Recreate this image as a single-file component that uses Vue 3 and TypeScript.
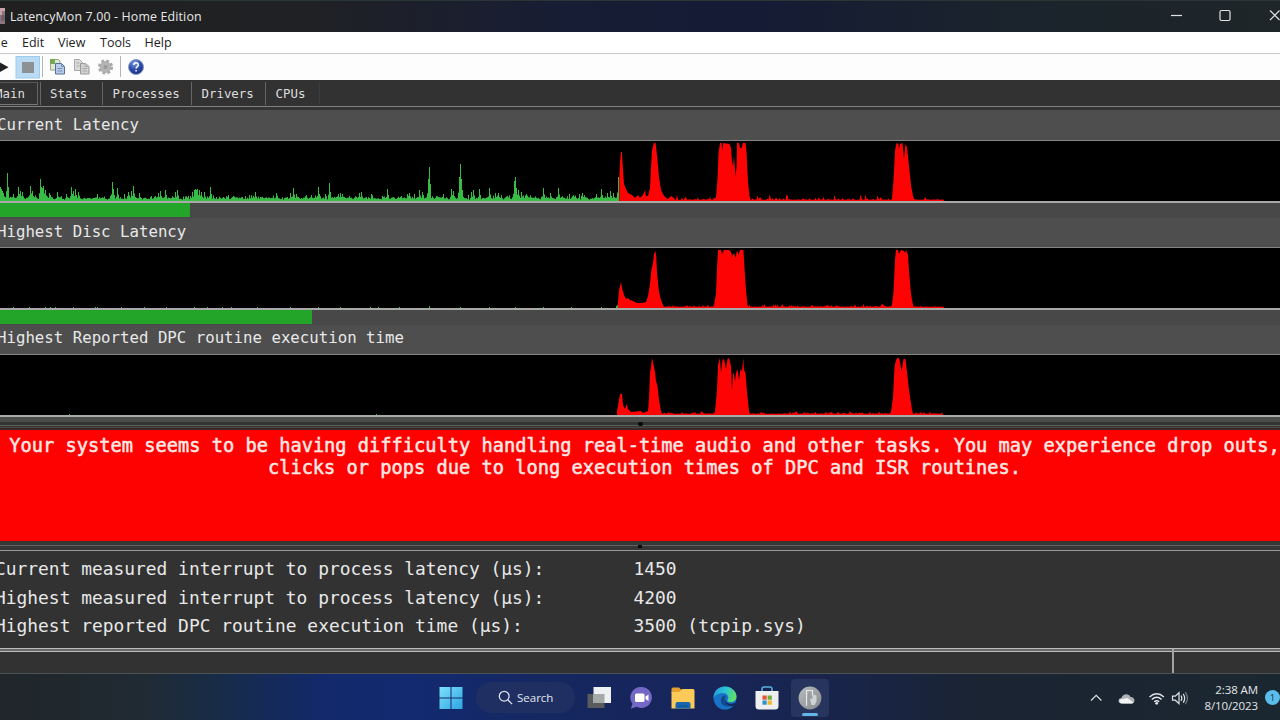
<script setup lang="ts">
type Point = [number, number]

interface Trace {
  id: string
  title: string
  green: string
  red: string
  bar: number | null
}

const BASE = 60

function makeRandom(seed: number): () => number {
  let s = seed
  return () => {
    s = (s * 1664525 + 1013904223) % 4294967296
    return s / 4294967296
  }
}

function greenPath(seed: number, end: number, spikes: Point[], floor: number, range: number): string {
  const rnd = makeRandom(seed)
  const heights: number[] = []
  let drift = 0.5
  for (let x = 0; x < end; x++) {
    drift = drift * 0.55 + rnd() * 0.45
    const r = rnd()
    heights.push(Math.max(0, floor + drift * range * 0.6 + r * r * r * range * 0.5))
  }
  for (const [x, h] of spikes) {
    heights[x] = Math.max(heights[x] ?? 0, h)
    if (h > 7 && x + 1 < end) heights[x + 1] = Math.max(heights[x + 1] ?? 0, h * 0.5)
    if (h > 7 && x > 0) heights[x - 1] = Math.max(heights[x - 1], h * 0.35)
  }
  return heights
    .map((h, x) => (h < 0.4 ? '' : `M${x + 0.5} ${BASE}V${(BASE - h).toFixed(1)}`))
    .join('')
}

function redPath(seed: number, groups: Point[][], end: number, range: number): string {
  const rnd = makeRandom(seed)
  let d = `M${groups[0][0][0]} ${BASE}`
  groups.forEach((group, i) => {
    for (const [x, h] of group) d += `L${x} ${BASE - h}`
    const from = group[group.length - 1][0] + 1
    const to = i + 1 < groups.length ? groups[i + 1][0][0] : end
    for (let x = from; x < to; x++) {
      const r = rnd()
      d += `L${x} ${(BASE - 1.2 - r * r * 0.9 - Math.pow(r, 9) * range).toFixed(1)}`
    }
  })
  return `${d}L${end} ${BASE}Z`
}

const currentSpikes: Point[] = [
  [0, 14], [1, 12], [2, 10], [3, 8], [7, 28], [13, 7], [18, 14], [20, 10], [22, 9], [30, 15], [32, 10],
  [40, 22], [41, 14], [42, 13], [43, 15], [45, 11], [49, 8], [57, 9], [66, 7], [71, 14], [73, 10], [75, 12],
  [78, 9], [97, 7], [112, 19], [113, 12], [117, 13], [124, 7], [128, 9], [131, 10], [133, 15], [139, 8],
  [158, 8], [160, 10], [165, 11], [175, 9], [177, 11], [192, 9], [194, 11], [195, 12], [196, 11], [197, 12],
  [199, 11], [201, 9], [204, 9], [210, 14], [228, 6], [255, 9], [276, 8], [290, 8], [293, 13], [296, 7],
  [318, 14], [329, 18], [325, 7], [338, 7], [340, 8], [342, 7], [359, 8], [361, 9], [371, 7], [387, 12],
  [407, 7], [409, 8], [414, 7], [419, 11], [422, 9], [428, 22], [429, 34], [443, 7], [451, 12], [453, 10],
  [459, 24], [460, 37], [461, 22], [468, 6], [473, 11], [471, 9], [479, 12], [489, 13], [495, 8], [498, 8],
  [514, 20], [515, 24], [516, 13], [518, 11], [521, 9], [526, 7], [543, 13], [550, 8], [558, 13],
  [569, 7], [579, 7], [582, 8], [596, 7], [601, 12], [607, 8], [610, 10], [613, 8], [618, 24]
]

const discSpikes: Point[] = [
  [13, 1], [29, 1], [45, 1], [50, 1], [55, 1], [73, 1], [95, 1], [97, 1], [121, 1], [144, 1], [166, 1],
  [194, 1], [207, 1], [222, 1], [231, 1], [257, 1], [290, 1], [318, 1], [340, 1], [370, 1], [378, 1],
  [399, 1], [429, 2], [460, 1], [489, 1], [515, 1], [543, 1], [571, 1], [601, 1], [616, 2], [617, 3]
]

const traces: Trace[] = [
  {
    id: 'current',
    title: 'Current Latency',
    green: greenPath(41, 619, currentSpikes, 0.8, 6),
    red: redPath(9, [
      [[619.3, 24], [620, 38], [621, 49], [622, 49], [622.7, 36], [624, 17], [626, 12], [628, 8], [632, 6], [635, 3],
        [638, 6], [640, 3], [643, 6], [645, 11], [646, 5], [648, 5], [650, 13], [651, 34], [652, 50], [653, 55], [654, 58], [655.6, 58],
        [657, 46], [659, 24], [661, 11], [663, 7], [665, 4], [668, 2], [671, 5], [674, 3]],
      [[716, 4], [717.5, 22], [718.5, 48], [720, 58], [721.5, 58], [722.3, 51], [723.2, 58], [729.5, 57], [731, 53], [732, 39], [733, 35],
        [734, 45], [735.5, 25], [736.5, 34], [737, 58], [739, 58], [740, 53], [741.5, 53], [743, 58], [745.6, 58], [746.6, 48], [748, 19], [749.5, 5]],
      [[892, 3], [893.5, 20], [895, 50], [896.5, 58], [898.5, 57], [899, 52], [900, 57], [902.5, 58], [904, 42], [905.5, 57], [907, 54], [909, 35], [911, 16], [913, 5]]
    ], 944, 5),
    bar: 189.5
  },
  {
    id: 'disc',
    title: 'Highest Disc Latency',
    green: greenPath(7, 618, discSpikes, 0, 0.3),
    red: redPath(23, [
      [[617.8, 4], [619, 18], [621, 26], [622, 20], [624, 13], [626, 9], [628, 10], [630, 8], [633, 7], [637, 5], [642, 5], [646, 6], [648, 12], [650, 24],
        [651.5, 39], [653, 45], [654, 54], [655.5, 57], [656.3, 51], [657, 35], [659, 16], [661, 8], [663, 3]],
      [[714, 3], [716, 14], [717, 40], [718, 58], [721, 58], [722, 54], [724, 58], [729, 58], [731, 56], [732, 52], [734, 55], [735.5, 50],
        [737, 58], [738.5, 53], [740, 58], [743.5, 58], [744.5, 40], [746, 18], [747.5, 3]],
      [[892, 3], [893.5, 16], [895, 48], [896, 58], [898, 58], [899, 54], [901, 58], [904, 57], [905, 55], [906, 58], [908, 53], [909, 37], [911, 14], [913, 3]]
    ], 944, 2),
    bar: 311.5
  },
  {
    id: 'dpc',
    title: 'Highest Reported DPC routine execution time',
    green: greenPath(3, 617, [[69, 1], [376, 1]], 0, 0),
    red: redPath(57, [
      [[617, 4], [618.5, 12], [620, 21], [622, 21], [623, 10], [625, 6], [626.5, 11], [628, 6], [631, 3], [641, 4], [643, 2], [648, 4], [649, 16], [650, 42],
        [651, 48], [652, 57], [653, 53], [655, 43], [656, 34], [657.5, 29], [659, 15], [661, 4]],
      [[715, 3], [717, 25], [718, 50], [720, 57], [721, 42], [722.5, 55], [724, 56], [726, 46], [727.5, 56], [729, 57], [731, 49], [732, 24], [733, 43],
        [734, 40], [735, 34], [736, 42], [737.5, 46], [739, 35], [740.5, 46], [742, 44], [743.3, 57], [744, 45], [745.5, 42], [747, 23], [749, 4]],
      [[891, 3], [893, 18], [894.5, 48], [896, 55], [897.5, 57], [899, 57], [900, 53], [901.5, 44], [903.5, 56], [905.5, 56], [907, 43], [909, 25], [912, 5]]
    ], 943, 2),
    bar: null
  }
]

const tabs = ['Main', 'Stats', 'Processes', 'Drivers', 'CPUs']
const menus = ['File', 'Edit', 'View', 'Tools', 'Help']

const readings = [
  { label: 'Current measured interrupt to process latency (µs):', value: '1450' },
  { label: 'Highest measured interrupt to process latency (µs):', value: '4200' },
  { label: 'Highest reported DPC routine execution time (µs):', value: '3500 (tcpip.sys)' }
]
</script>

<template>
  <div class="screen">
    <header class="titlebar">
      <svg class="app-icon" width="14" height="16" viewBox="0 0 14 16">
        <rect width="14" height="16" fill="#8d7580" />
        <path d="M9 0h5v3h-3v4H9z" fill="#c9a3a9" />
        <path d="M10 7h4v6h-4z" fill="#6d626c" />
      </svg>
      <span class="title">LatencyMon 7.00 - Home Edition</span>
      <svg class="controls" width="120" height="31" viewBox="0 0 120 31" fill="none" stroke="#dfe3e4" stroke-width="1.2">
        <path d="M11 14.5h11" />
        <rect x="60" y="9.500" width="10" height="10" rx="1.500" />
        <path d="M110 9.500l9.500 9.500M119.500 9.500l-9.500 9.500" />
      </svg>
    </header>

    <nav class="menubar">
      <span v-for="m in menus" :key="m" :class="['menu', m.toLowerCase()]">{{ m }}</span>
    </nav>

    <div class="toolbar">
      <svg width="160" height="26" viewBox="0 0 160 26">
        <defs>
          <radialGradient id="help" cx=".4" cy=".25" r=".8">
            <stop offset="0" stop-color="#7d9fe0" />
            <stop offset=".5" stop-color="#2e4fae" />
            <stop offset="1" stop-color="#182b78" />
          </radialGradient>
        </defs>
        <path d="M0 8.500l8.500 4.700L0 18z" fill="#222" />
        <rect x="16" y="2.500" width="23.500" height="21.500" fill="#b9dcf4" stroke="#9ccbec" />
        <rect x="22" y="8" width="12" height="11" fill="#8d9194" />
        <path d="M42.500 2v21M120.500 2v21" stroke="#b4b4b4" />
        <g stroke-width="1">
          <path d="M50.500 5.500h8l1.500 1.500v9h-9.500z" fill="#dfead0" stroke="#94a78a" />
          <path d="M50 5h5v5h-5z" fill="#78a854" />
          <path d="M55.500 9.500h6l3 3v7.500h-9z" fill="#b9cdea" stroke="#54719d" />
          <path d="M61.500 9.500v3h3M57.500 14.500h5M57.500 17h5" fill="none" stroke="#7890b6" />
          <path d="M74.500 5.500h5l3 3v8h-8z" fill="#dadada" stroke="#a8a8a8" />
          <path d="M80.500 9.500h5l3.500 3v7.500h-8.500z" fill="#d0d0d0" stroke="#9a9a9a" />
          <path d="M85 9.500v3h4M82.500 14.500h4.500M82.500 17h4.500M76.500 9h3M76.500 12h3" fill="none" stroke="#aaa" />
        </g>
        <circle cx="105.500" cy="13" r="5.900" fill="#b4b4b4" />
        <circle cx="105.500" cy="13" r="6.300" fill="none" stroke="#aaa" stroke-width="2.600" stroke-dasharray="2.800 2.150" />
        <circle cx="105.500" cy="13" r="2" fill="#999" />
        <circle cx="136" cy="13" r="7.500" fill="url(#help)" stroke="#8b9cc5" stroke-width="1" />
        <path d="M133.800 11c.1-3 4.500-3 4.500-.1 0 1.700-2.200 1.700-2.200 3.600M136.100 16v1.400" fill="none" stroke="#fff" stroke-width="1.500" />
      </svg>
    </div>

    <div class="tabs">
      <div v-for="t in tabs" :key="t" :class="['tab', t.toLowerCase()]"><span>{{ t }}</span></div>
    </div>

    <section class="traces">
      <div v-for="t in traces" :key="t.id" :class="['trace', t.id]">
        <h2>{{ t.title }}</h2>
        <svg class="plot" width="1280" height="60" viewBox="0 0 1280 60">
          <path :d="t.green" stroke="#37bd45" stroke-width="1" fill="none" />
          <path :d="t.red" fill="#fe0303" />
        </svg>
        <div v-if="t.bar !== null" class="track">
          <div class="fill" :style="{ width: t.bar + 'px' }"></div>
        </div>
      </div>
    </section>

    <div class="splitter upper"><i></i></div>
    <div class="alert">
      Your system seems to be having difficulty handling real-time audio and other tasks. You may experience drop outs,<br />clicks or pops due to long execution times of DPC and ISR routines.
    </div>
    <div class="splitter lower"><i></i></div>

    <section class="readings">
      <div v-for="r in readings" :key="r.label" class="reading">
        <span class="label">{{ r.label }}</span>
        <span>{{ r.value }}</span>
      </div>
    </section>

    <div class="statusbar"><div class="cell"></div></div>

    <footer class="taskbar">
      <div class="apps">
        <svg class="start" width="24" height="24" viewBox="0 0 24 24">
          <defs>
            <linearGradient id="win" x1="0" y1="0" x2="1" y2="1">
              <stop offset="0" stop-color="#7fe0fb" />
              <stop offset="1" stop-color="#2ba5e2" />
            </linearGradient>
          </defs>
          <path d="M.5 1h11v10.500H.5zM12.500 1h11v10.500h-11zM.5 12.500h11V23H.5zM12.500 12.500h11V23h-11z" fill="url(#win)" />
        </svg>
        <div class="search">
          <svg width="15" height="15" viewBox="0 0 15 15" fill="none" stroke="#dbe2ee" stroke-width="1.300">
            <circle cx="6.200" cy="6.200" r="4.900" />
            <path d="M9.800 9.800l4.300 4.300" />
          </svg>
          <span>Search</span>
        </div>
        <svg class="views" width="24" height="22" viewBox="0 0 24 22">
          <path d="M.5 7h17v14H.5z" fill="#595b5d" />
          <path d="M6.500 0H24v16H6.500z" fill="#edf1f2" />
          <path d="M6.500 7h11v9h-11z" fill="#a5a9aa" />
        </svg>
        <svg class="chat" width="24" height="24" viewBox="0 0 24 24">
          <path d="M12.500 1a10.500 10.500 0 1 1-5 19.800L1.800 22.800l1.700-5A10.500 10.500 0 0 1 12.500 1z" fill="#7468c6" />
          <rect x="6" y="7.500" width="9.500" height="8.500" rx="1.500" fill="#fff" />
          <path d="M16.500 10.500l3-2v6.500l-3-2z" fill="#fff" />
        </svg>
        <svg class="folder" width="24" height="22" viewBox="0 0 24 22">
          <path d="M.5 2Q.5.500 2 .5h6L10.500 3v3H.5z" fill="#e3a12f" />
          <path d="M.5 5h8l2.500-3H22Q23.500 2 23.500 3.500v18H.5z" fill="#fcca58" />
          <path d="M4.500 21.500V17q0-2 2-2h11q2 0 2 2v4.500z" fill="#1767ae" />
          <path d="M7 19.500q0-1 1-1h8q1 0 1 1z" fill="#0f4f8d" />
        </svg>
        <svg class="edge" width="24" height="24" viewBox="0 0 24 24">
          <defs>
            <linearGradient id="swirl" x1="0" y1=".2" x2="1" y2=".5">
              <stop offset="0" stop-color="#2199df" />
              <stop offset=".5" stop-color="#2dc4d2" />
              <stop offset="1" stop-color="#62df64" />
            </linearGradient>
          </defs>
          <circle cx="12" cy="12" r="11.500" fill="#1673c5" />
          <path d="M.5 12C1 4 6 .5 12 .5S23.500 5 23.500 10.500c0 4-3 5.500-6 5.500-3.500 0-3.500-1.500-2.500-2.500C16.500 10.500 14 7 10 7 5 7 1.500 10 .5 12z" fill="url(#swirl)" />
          <path d="M9 11c-3 5 0 9.500 6 9.500 3 0 5-1 6.500-3-2 1-8 1.500-9.500-2.500-.8-2 .5-3.500 1-4.500-1-1.500-3-1-4 .5z" fill="#15488e" />
          <path d="M13.500 11c-2 2.500-.5 6.500 4 6.800 3 .2 5.500-1.300 6.500-2.300v3l-2.500 1.500c-3 1-8-1-9-4-.5-2 0-3.500 1-5z" fill="#14285d" />
        </svg>
        <svg class="store" width="24" height="24" viewBox="0 0 24 24">
          <path d="M7 5V3q0-2 2-2h6q2 0 2 2v2" fill="none" stroke="#59b2df" stroke-width="1.500" />
          <path d="M.5 5h23v15q0 3.500-3.500 3.500H4Q.5 23.500.5 20z" fill="#edf0ef" />
          <path d="M7.500 9.500h4.200v4.200H7.500z" fill="#e85238" />
          <path d="M12.600 9.500h4.200v4.200h-4.200z" fill="#6eae3b" />
          <path d="M7.500 14.500h4.200v4.200H7.500z" fill="#2e91d1" />
          <path d="M12.600 14.500h4.200v4.200h-4.200z" fill="#f3b72c" />
        </svg>
        <div class="active">
          <svg width="24" height="24" viewBox="0 0 24 24">
            <defs>
              <linearGradient id="disc" x1="0" y1="0" x2="1" y2="1">
                <stop offset="0" stop-color="#b8bcbe" />
                <stop offset="1" stop-color="#85898c" />
              </linearGradient>
            </defs>
            <circle cx="12" cy="12" r="11.400" fill="url(#disc)" />
            <path d="M8.500 20V4.500h6v5" fill="none" stroke="#e4e6e6" stroke-width="1.200" />
            <path d="M10 6.500h2.500v10.500H10z" fill="#999da0" />
            <path d="M12 13q1.500-1 2.500 0V9.500q2.500-1.500 4 .5v5.500l-2 3.500h-3z" fill="#d0d3d4" />
          </svg>
          <i></i>
        </div>
      </div>
      <div class="tray">
        <svg width="105" height="24" viewBox="0 0 105 24" fill="none">
          <path d="M6 14.500l5.200-5.200 5.200 5.200" stroke="#dce0e2" stroke-width="1.200" />
          <path d="M37 17.500c-4.500 0-4.500-5.500-.5-5.500 1-4.500 7.500-5 9-1 4-.5 6 5.500 1.500 6.500z" fill="#aeb2b5" />
          <path d="M37 17.500c-4-.5-3-5 .5-4.500l5-1 6 4.800q-.8.700-1.500.7z" fill="#f2f3f3" />
          <path d="M64.500 11q7.200-6.500 14.400 0M66.800 13.500q4.900-4.500 9.800 0M69.200 15.800q2.500-2.300 5 0" stroke="#e2e5e7" stroke-width="1.400" />
          <circle cx="71.700" cy="17.300" r="1.400" fill="#e2e5e7" />
          <path d="M87.500 10.200h2.800l3.700-3.500v11l-3.700-3.500h-2.800z" stroke="#dee2e4" stroke-width="1.200" />
          <path d="M96 9.500q1.700 2.700 0 5.400M98.200 7.800q3 4.400 0 8.800" stroke="#dee2e4" stroke-width="1.200" />
          <path d="M100.300 6.200q4.300 6 0 12" stroke="#717b82" stroke-width="1.200" />
        </svg>
        <div class="clock"><span>2:38 AM</span><span>8/10/2023</span></div>
        <div class="badge">1</div>
      </div>
    </footer>
  </div>
</template>

<style>
html,
body {
  margin: 0;
  overflow: hidden;
  background: #323232;
}
</style>

<style scoped>
.screen {
  width: 1280px;
  height: 720px;
  overflow: hidden;
  display: flex;
  flex-direction: column;
  background: #323232;
  color: #e8e8e8;
  font-family: "DejaVu Sans Mono", monospace;
}
.screen * {
  box-sizing: border-box;
}
.screen > * {
  flex: none;
}
svg {
  display: block;
  flex: none;
}
.titlebar {
  height: 32px;
  display: flex;
  align-items: center;
  padding-bottom: 1px;
  border-top: 1px solid #2a3535;
  background: linear-gradient(90deg, #202020 0, #202124 300px, #171d34 560px, #151b35 750px, #1a232c 1000px, #1f2629 1280px);
  font-family: "Open Sans", "Noto Sans", sans-serif;
}
.app-icon {
  margin-left: -9px;
}
.title {
  margin-left: 5px;
  font-size: 12.400px;
  letter-spacing: 0.150px;
  white-space: nowrap;
  color: #e8e8e8;
}
.controls {
  margin-left: auto;
}
.menubar {
  height: 22px;
  display: flex;
  align-items: center;
  background: #fff;
  border-bottom: 1px solid #c8c8c8;
  color: #222;
  font: 12.500px/20px "Open Sans", "Noto Sans", sans-serif;
}
.menu {
  white-space: nowrap;
  flex: none;
  padding-top: 1px;
}
.menu.file { margin-left: -12px; width: 34px; }
.menu.edit { width: 36px; }
.menu.view { width: 42px; }
.menu.tools { width: 44.500px; }
.toolbar {
  height: 26px;
  background: #fdfdfd;
}
.tabs {
  height: 30px;
  display: flex;
  padding-bottom: 4px;
  background: linear-gradient(#323232 25px, #323232 26px, #808080 26px, #808080 27px, #343434 27px);
  font-size: 12.400px;
  color: #dedede;
}
.tab {
  display: flex;
  align-items: center;
  height: 23px;
  margin-top: 2px;
  padding-left: 9.500px;
  border-right: 1px solid #666;
}
.tab.main { width: 38px; padding-left: 0; border-top: 1px solid #555; border-bottom: 1px solid #777; box-shadow: 2px 0 0 #323232, 3px 0 0 #666; }
.tab.main span { margin-left: -5px; }
.tab.stats { width: 65px; padding-left: 12px; }
.tab.processes { width: 89px; }
.tab.drivers { width: 74px; }
.tab.cpus { width: 54px; border-right-color: #3c3c3c; }
.trace h2 {
  margin: 0;
  height: 30px;
  text-indent: -3px;
  border-bottom: 1px solid #858585;
  background: #4e4e4e;
  font-size: 15.720px;
  line-height: 28px;
  font-weight: 400;
  white-space: pre;
}
.trace.current h2 {
  height: 31px;
  line-height: 29px;
}
.trace.dpc h2 {
  line-height: 26px;
}
.plot {
  background: #000;
  border-bottom: 2px solid #a9a9a7;
  box-sizing: content-box !important;
}
.track {
  height: 15px;
  background: #484848;
}
.fill {
  height: 14px;
  background: #23a52a;
}
.splitter {
  display: flex;
  justify-content: center;
}
.upper {
  height: 13px;
  background: linear-gradient(#4b4d4b 0 5px, #323433 5px 8px, #5c5e5c 8px 9px, #343434 9px 10px, #484848 10px 11px, #3b2928 11px);
}
.upper i {
  width: 5px;
  height: 4px;
  margin-top: 5px;
  border-radius: 2px;
  background: #080808;
}
.alert {
  height: 111px;
  padding: 5px 0 0 9px;
  background: #fe0202;
  color: #ffe9e4;
  font-size: 18.680px;
  line-height: 22px;
  text-align: center;
  white-space: nowrap;
  -webkit-text-stroke: 0.500px #ffe9e4;
}
.lower {
  height: 10px;
  background: linear-gradient(#3a3030 0 1px, #363836 1px 4px, #626462 4px 5px, #363636 5px 9px, #999 9px);
}
.lower i {
  width: 4px;
  height: 3px;
  margin-top: 4px;
  background: #0c0c0c;
}
.readings {
  height: 97px;
  padding-top: 4px;
  font-size: 17.900px;
}
.reading {
  display: flex;
  height: 28.500px;
  line-height: 28.500px;
  white-space: nowrap;
}
.label {
  width: 633.500px;
  text-indent: -5px;
}
.statusbar {
  height: 26px;
  border-top: 1px solid #bcbcbc;
  border-bottom: 1px solid #4b5357;
  background: linear-gradient(#686868 0 2px, #bcbcbc 2px 3px, #323232 3px);
}
.cell {
  width: 1174px;
  height: 24px;
  border-right: 2px solid #a3a3a3;
}
.taskbar {
  height: 46px;
  display: flex;
  align-items: center;
  justify-content: space-between;
  padding-left: 439px;
  background: linear-gradient(90deg, #20262a 0, #202a33 140px, #182c45 210px, #13296a 320px, #132a70 410px, #15275f 560px, #17255a 700px, #192449 850px, #1a2433 970px, #1b2730 1280px);
  font-family: "Open Sans", "Noto Sans", sans-serif;
}
.apps,
.tray {
  display: flex;
  align-items: center;
  height: 46px;
  padding-top: 1px;
}
.search {
  width: 99px;
  height: 31px;
  margin: 0 12px 0 13px;
  padding-left: 22px;
  display: flex;
  align-items: center;
  gap: 4px;
  border-radius: 16px;
  background: #202f62;
  color: #e3e7ef;
  font-size: 11.500px;
}
.views { margin-right: 18px; }
.chat { margin-right: 18px; }
.folder { margin-right: 18px; }
.edge { margin-right: 18px; }
.store { margin-right: 12px; }
.active {
  width: 38px;
  height: 38px;
  display: flex;
  flex-direction: column;
  align-items: center;
  padding-top: 7px;
  border-radius: 4px;
  background: #27345d;
}
.active i {
  width: 16px;
  height: 3px;
  margin-top: 3px;
  border-radius: 2px;
  background: #62b5e4;
}
.tray {
  width: 195px;
}
.clock {
  width: 69px;
  display: flex;
  flex-direction: column;
  align-items: flex-end;
  font-size: 11.500px;
  line-height: 16px;
  letter-spacing: -0.100px;
  white-space: nowrap;
  color: #e3e5e6;
}
.badge {
  flex: none;
  width: 15px;
  height: 15px;
  margin-left: 7px;
  border-radius: 50%;
  background: #5bbdea;
  color: #17384a;
  font-size: 9.500px;
  line-height: 15px;
  text-align: center;
}
</style>
